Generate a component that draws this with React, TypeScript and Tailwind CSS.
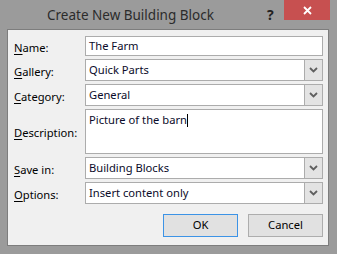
import React from 'react'

const font = { fontFamily: '"Segoe UI", "Noto Sans", "Liberation Sans", sans-serif' }

function Chevron() {
  return (
    <svg width="9" height="6" viewBox="0 0 9 6" className="block">
      <path d="M1 1 L4.5 4.5 L8 1" fill="none" stroke="#5f5f5f" strokeWidth="1.8" />
    </svg>
  )
}

function Label({ k, rest }: { k: string; rest: string }) {
  return (
    <span className="text-[11.2px] text-black leading-none">
      <span className="underline underline-offset-2">{k}</span>
      {rest}
    </span>
  )
}

function Select({ value }: { value: string }) {
  return (
    <div className="flex h-[22px] w-[238px] border border-[#acacac] bg-white">
      <div className="flex flex-1 items-center pl-[3px] text-[11.2px] text-[#0b0b2a]">{value}</div>
      <div className="flex w-[18px] items-center justify-center border-l border-[#acacac] bg-[#e3e3e3]">
        <Chevron />
      </div>
    </div>
  )
}

function Row({ k, rest, children, h = 'h-[22px]' }: { k: string; rest: string; children: React.ReactNode; h?: string }) {
  return (
    <div className={`flex ${h} items-center`}>
      <div className="w-[77px] pl-[6px]">
        <Label k={k} rest={rest} />
      </div>
      {children}
    </div>
  )
}

export default function App() {
  return (
    <div className="flex h-[254px] w-[337px] flex-col bg-[#9b9b9b]" style={font}>
      {/* title bar */}
      <div className="relative flex h-[29px] shrink-0">
        <div className="pl-[47px] pt-[5px] text-[13.5px] text-[#2b2b2b]">Create New Building Block</div>
        <div className="absolute left-[267px] top-[4px] text-[14px] font-bold text-[#222]">?</div>
        <div className="absolute left-[284px] top-0 flex h-[20px] w-[46px] items-center justify-center bg-[#c75050]">
          <svg width="9" height="9" viewBox="0 0 9 9">
            <path d="M1 1 L8 8 M8 1 L1 8" stroke="#fff" strokeWidth="1.8" />
          </svg>
        </div>
      </div>

      {/* client area */}
      <div className="ml-[7px] mr-[8px] mb-[8px] flex flex-1 flex-col border border-[#7d7d7d] bg-[#f0f0f0] pt-[6px]">
        <div className="flex flex-col gap-[3px]">
          <Row k="N" rest="ame:" h="h-[20px]">
            <div className="flex h-[20px] w-[238px] items-center border border-[#acacac] bg-white pl-[3px] text-[11.2px] text-[#0b0b2a]">
              The Farm
            </div>
          </Row>
          <Row k="G" rest="allery:">
            <Select value="Quick Parts" />
          </Row>
          <Row k="C" rest="ategory:">
            <Select value="General" />
          </Row>
          <div className="flex h-[45px]">
            <div className="flex w-[77px] items-center pt-[2px] pl-[6px]">
              <Label k="D" rest="escription:" />
            </div>
            <div className="flex h-[45px] w-[238px] items-start border border-[#acacac] bg-white pl-[3px] pt-[2px] text-[11.2px] text-[#0b0b2a]">
              <span>Picture of the barn</span>
              <span className="mt-[2px] h-[13px] w-px bg-black" />
            </div>
          </div>
          <Row k="S" rest="ave in:">
            <Select value="Building Blocks" />
          </Row>
          <Row k="O" rest="ptions:">
            <Select value="Insert content only" />
          </Row>
        </div>

        <div className="mt-[10px] flex gap-[10px] pl-[155px]">
          <button className="h-[23px] w-[75px] border border-[#3c93e6] bg-[#e1e1e1] text-[11.2px] text-black">OK</button>
          <button className="h-[23px] w-[75px] border border-[#adadad] bg-[#e1e1e1] text-[11.2px] text-black">Cancel</button>
        </div>
      </div>
    </div>
  )
}
